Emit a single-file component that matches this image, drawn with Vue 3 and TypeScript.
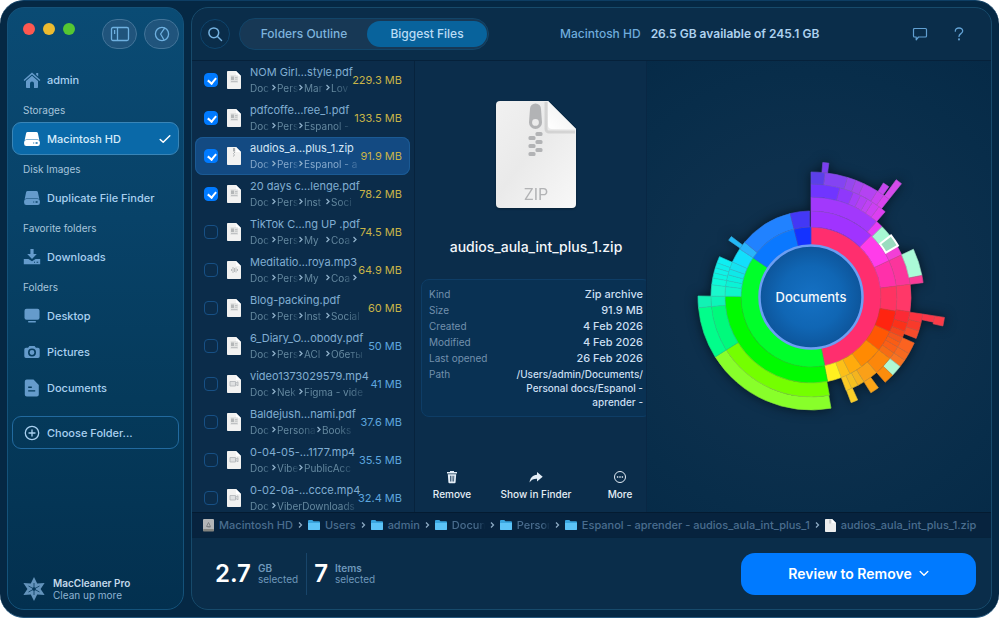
<script setup lang="ts">
import { ref } from 'vue'

type IconName = 'home' | 'disk' | 'download' | 'desktop' | 'camera' | 'doc'
interface NavItem { label: string; icon: IconName; active?: boolean }
interface NavGroup { title?: string; items: NavItem[] }
interface Crumb { text: string; wide?: boolean }
interface FileRow {
  name: string
  crumbs: Crumb[]
  tail?: boolean
  size: string
  large: boolean
  kind: 'pdf' | 'zip' | 'audio' | 'video'
  checked: boolean
}
type Arc = [inner: number, outer: number, from: number, to: number, color: string]

const groups: NavGroup[] = [
  { items: [{ label: 'admin', icon: 'home' }] },
  { title: 'Storages', items: [{ label: 'Macintosh HD', icon: 'disk', active: true }] },
  { title: 'Disk Images', items: [{ label: 'Duplicate File Finder', icon: 'disk' }] },
  { title: 'Favorite folders', items: [{ label: 'Downloads', icon: 'download' }] },
  {
    title: 'Folders',
    items: [
      { label: 'Desktop', icon: 'desktop' },
      { label: 'Pictures', icon: 'camera' },
      { label: 'Documents', icon: 'doc' },
    ],
  },
]

const c = (...names: string[]): Crumb[] => names.map((text) => ({ text }))

const files = ref<FileRow[]>([
  { name: 'NOM Girl…style.pdf', crumbs: c('Doc', 'Pers', 'Mar', 'Lov'), size: '229.3 MB', large: true, kind: 'pdf', checked: true },
  { name: 'pdfcoffe…ree_1.pdf', crumbs: c('Doc', 'Pers', 'Espanol -'), size: '133.5 MB', large: true, kind: 'pdf', checked: true },
  { name: 'audios_a…plus_1.zip', crumbs: c('Doc', 'Pers', 'Espanol - a'), size: '91.9 MB', large: true, kind: 'zip', checked: true },
  { name: '20 days c…lenge.pdf', crumbs: c('Doc', 'Pers', 'Inst', 'Soci'), size: '78.2 MB', large: true, kind: 'pdf', checked: true },
  { name: 'TikTok C…ng UP .pdf', crumbs: c('Doc', 'Pers', 'My', 'Coa'), tail: true, size: '74.5 MB', large: true, kind: 'pdf', checked: false },
  { name: 'Meditatio…roya.mp3', crumbs: c('Doc', 'Pers', 'My', 'Coa'), tail: true, size: '64.9 MB', large: true, kind: 'audio', checked: false },
  { name: 'Blog-packing.pdf', crumbs: c('Doc', 'Pers', 'Inst', 'Social'), size: '60 MB', large: true, kind: 'pdf', checked: false },
  { name: '6_Diary_O…obody.pdf', crumbs: c('Doc', 'Pers', 'ACI', 'Обеты'), size: '50 MB', large: false, kind: 'pdf', checked: false },
  { name: 'video1373029579.mp4', crumbs: c('Doc', 'Nek', 'Figma - vide'), size: '41 MB', large: false, kind: 'video', checked: false },
  { name: 'Baldejush…nami.pdf', crumbs: [{ text: 'Doc' }, { text: 'Persona', wide: true }, { text: 'Books' }], size: '37.6 MB', large: false, kind: 'pdf', checked: false },
  { name: '0-04-05-…1177.mp4', crumbs: c('Doc', 'Vibe', 'PublicAcc'), size: '35.5 MB', large: false, kind: 'video', checked: false },
  { name: '0-02-0a-…ccce.mp4', crumbs: c('Doc', 'ViberDownloads'), size: '32.4 MB', large: false, kind: 'video', checked: false },
])
const selected = ref(2)
const tab = ref<'outline' | 'biggest'>('biggest')

const details = [
  ['Kind', 'Zip archive'],
  ['Size', '91.9 MB'],
  ['Created', '4 Feb 2026'],
  ['Modified', '4 Feb 2026'],
  ['Last opened', '26 Feb 2026'],
]

const trail = [
  { text: 'Macintosh HD', icon: 'drive' },
  { text: 'Users', icon: 'folder' },
  { text: 'admin', icon: 'folder' },
  { text: 'Docun', icon: 'folder', cut: true },
  { text: 'Person', icon: 'folder', cut: true },
  { text: 'Espanol - aprender - audios_aula_int_plus_1', icon: 'folder' },
  { text: 'audios_aula_int_plus_1.zip', icon: 'file' },
]

// Ring radii of the sunburst, from the hub outwards
const R = [52, 70, 86, 100, 113, 125, 135, 145]

const arcs: Arc[] = [
  [R[0], R[1], 0, 168.7, '#ff2e6e'],
  [R[0], R[1], 168.7, 304, '#00ff2a'],
  [R[0], R[1], 304, 346, '#0a78ff'],
  [R[0], R[1], 346, 360, '#1432ff'],
  // violet branch
  [R[1], R[2], 0, 44.4, '#a033ff'],
  [R[2], R[3], 0, 41, '#a238fc'],
  [R[2], R[3], 41, 45.3, '#e83cf4'],
  [R[3], R[4], 0, 14.8, '#7035ff'],
  [R[3], R[4], 14.8, 22, '#8f38fb'],
  [R[3], R[4], 22, 26, '#a63ff8'],
  [R[3], R[4], 26, 30, '#b440f4'],
  [R[3], R[4], 30, 33, '#bf42f4'],
  [R[3], R[4], 33, 37, '#cc40f2'],
  [R[3], R[4], 37, 41, '#dc3ff0'],
  [R[4], R[5], 0, 6.5, '#5b3fe8'],
  [R[4], R[5], 6.5, 17, '#8444f2'],
  [R[4], R[5], 17, 21, '#9648ee'],
  [R[4], R[5], 21, 25, '#a547ee'],
  [R[4], R[5], 25, 32, '#b443f2'],
  [R[4], R[5], 32, 35.6, '#c942f0'],
  [R[4], R[5], 35.6, 38.6, '#d843ee'],
  [R[5], R[6], 5, 7.6, '#7a3ff0'],
  [R[5], R[6], 32.4, 35.2, '#c646ee'],
  [R[5], R[7], 36, 38.6, '#d54bec'],
  // magenta and pink
  [R[1], R[2], 44.4, 65, '#ff3cea'],
  [R[2], R[3], 45.3, 52.4, '#a6f7d3'],
  [R[2], R[3], 59.4, 65, '#f23fd6'],
  [R[1], R[2], 65, 82.7, '#ff30aa'],
  [R[2], R[3], 65, 82.7, '#fb359c'],
  [R[3], R[4], 65, 79, '#abfbd8'],
  [R[3], R[4], 79, 82.7, '#f93c97'],
  // reds
  [R[1], R[2], 82.7, 99.5, '#ff3362'],
  [R[2], R[3], 82.7, 98.5, '#ff3868'],
  [R[1], R[2], 99.5, 113.8, '#ff2410'],
  [R[2], R[3], 98.5, 105, '#fb2a35'],
  [R[2], R[3], 105, 110, '#fb3119'],
  [R[2], R[3], 110, 113.8, '#f4451c'],
  [R[3], R[4], 98.7, 103, '#fd3340'],
  [R[3], R[4], 103, 107.5, '#f83a2b'],
  [R[3], R[4], 107.5, 111.5, '#f64b2b'],
  [R[4], R[5], 98.7, 101.6, '#fb3648'],
  [R[5], R[6], 98.7, 102.4, '#fb3b48'],
  // oranges
  [R[1], R[2], 113.8, 128, '#ff5704'],
  [R[2], R[3], 113.8, 117, '#f4551d'],
  [R[2], R[3], 117, 120, '#f95d15'],
  [R[2], R[3], 120, 124, '#fa5f17'],
  [R[2], R[3], 124, 128, '#f76c14'],
  [R[3], R[4], 114, 120, '#fb6320'],
  [R[3], R[4], 120, 124, '#f76a20'],
  [R[3], R[4], 124, 128, '#f77423'],
  [R[3], R[4], 128, 133.8, '#b0f9d4'],
  [R[3], R[4], 133.8, 139, '#fb8c0c'],
  [R[1], R[2], 128, 144, '#ff8a02'],
  [R[2], R[3], 128, 139, '#fc870b'],
  [R[2], R[3], 139, 148, '#faa018'],
  [R[3], R[4], 143.4, 148, '#fca518'],
  // yellows
  [R[1], R[2], 144, 153, '#ffab0c'],
  [R[1], R[2], 153, 159.4, '#fcc018'],
  [R[1], R[2], 159.4, 168.9, '#fff01f'],
  [R[2], R[3], 148, 152, '#f5b41e'],
  [R[2], R[3], 152, 156, '#f4c020'],
  [R[2], R[3], 156, 159.4, '#fbc925'],
  [R[3], R[4], 155.6, 159.2, '#fbcf28'],
  // greens
  [R[1], R[2], 168.9, 270.5, '#00fb00'],
  [R[2], R[3], 169.4, 238, '#74ff00'],
  [R[3], R[4], 169.8, 238, '#88ff2a'],
  [R[2], R[3], 238, 264.5, '#00fa7c'],
  [R[3], R[4], 238, 264.5, '#02fd8b'],
  [R[2], R[3], 264.5, 270.5, '#0df5b9'],
  [R[3], R[4], 264.5, 270.5, '#12f2b4'],
  // cyans
  [R[1], R[2], 270.5, 277, '#0ff5cd'],
  [R[2], R[3], 270.5, 277, '#1af8cc'],
  [R[1], R[2], 277, 281, '#0af3d6'],
  [R[2], R[3], 277, 281, '#0ef9da'],
  [R[1], R[2], 281, 285, '#0af0df'],
  [R[2], R[3], 281, 284, '#0cf5e0'],
  [R[1], R[2], 285, 289, '#0fe8e8'],
  [R[2], R[3], 284, 287, '#10f2e8'],
  [R[2], R[3], 287, 290, '#0eeeea'],
  [R[1], R[2], 289, 294, '#14e2f0'],
  [R[2], R[3], 290, 293.8, '#0feef2'],
  [R[1], R[2], 294, 304, '#12dffc'],
  // blues
  [R[1], R[2], 304, 309.6, '#29b4fb'],
  [R[2], R[3], 304.6, 307.2, '#22b9f6'],
  [R[1], R[2], 309.6, 346, '#2182ff'],
  [R[1], R[2], 346, 359, '#4338f5'],
]

function point(r: number, deg: number): string {
  const a = (deg * Math.PI) / 180
  return `${(150 + r * Math.sin(a)).toFixed(2)} ${(150 - r * Math.cos(a)).toFixed(2)}`
}

function arcPath(inner: number, outer: number, from: number, to: number): string {
  const large = to - from > 180 ? 1 : 0
  return `M${point(inner, from)}L${point(outer, from)}A${outer} ${outer} 0 ${large} 1 ${point(outer, to)}L${point(inner, to)}A${inner} ${inner} 0 ${large} 0 ${point(inner, from)}Z`
}
</script>

<template>
  <div class="window">
    <aside class="sidebar">
      <div class="titlebar">
        <div class="lights"><i class="light red"></i><i class="light yellow"></i><i class="light green"></i></div>
        <div class="tools">
          <button class="tool" type="button" aria-label="Toggle sidebar">
            <svg width="20" height="16" viewBox="0 0 20 16" fill="none" stroke="currentColor" stroke-width="1.3">
              <rect x="1.5" y="1.5" width="17" height="13" rx="1.5" /><path d="M7.5 1.5v13M4.6 4v4" />
            </svg>
          </button>
          <button class="tool" type="button" aria-label="Scan history">
            <svg width="16" height="16" viewBox="0 0 16 16" fill="none" stroke="currentColor" stroke-width="1.3" stroke-linejoin="round" stroke-linecap="round">
              <circle cx="8" cy="8" r="6.6" /><path d="M10.6 2.2 6.6 8l3.2 5.5" />
            </svg>
          </button>
        </div>
      </div>

      <nav class="nav">
        <template v-for="(group, g) in groups" :key="g">
          <h2 v-if="group.title" class="nav-title">{{ group.title }}</h2>
          <a v-for="item in group.items" :key="item.label" href="#" class="nav-item" :class="{ active: item.active }">
            <svg class="nav-icon" width="18" height="18" viewBox="0 0 18 18" fill="currentColor">
              <template v-if="item.icon === 'home'">
                <path d="M9 1.4 17.4 9l-.9 1L9 3.4 1.5 10l-.9-1z" /><path d="M13.2 2h2v3.6l-2-1.8z" />
                <path d="M9 4.8 15 10v6.2a.8.8 0 0 1-.8.8H11v-4.6a2 2 0 0 0-4 0V17H3.8a.8.8 0 0 1-.8-.8V10z" />
              </template>
              <template v-else-if="item.icon === 'disk'">
                <path d="M4.6 2h8.8a1.6 1.6 0 0 1 1.5 1.2L16.3 9.9a4 4 0 0 0-1.8-.5h-11a4 4 0 0 0-1.8.5L3.1 3.2A1.6 1.6 0 0 1 4.6 2z" />
                <path fill-rule="evenodd" d="M3.3 10h11.4A2.2 2.2 0 0 1 16.9 12.2v1.6A2.2 2.2 0 0 1 14.7 16H3.3a2.2 2.2 0 0 1-2.2-2.2v-1.6A2.2 2.2 0 0 1 3.3 10zM10.2 12.6v.9h1v-.9zM12.6 12.3v1.4h2v-1.4z" />
              </template>
              <template v-else-if="item.icon === 'download'">
                <path d="M7.4 1h3.2v5h3.2L9 11 4.2 6h3.2z" />
                <path fill-rule="evenodd" d="M.8 11h4.6L9 13.2 12.6 11h4.6v5.2H.8zM11 13.8v1h1v-1zM13.6 13.8v1h1.6v-1z" />
              </template>
              <template v-else-if="item.icon === 'desktop'">
                <rect x="1.5" y="1.8" width="15" height="11" rx="2" /><rect x="5" y="14" width="8" height="1.4" rx=".7" />
              </template>
              <template v-else-if="item.icon === 'camera'">
                <path fill-rule="evenodd" d="M6.4 3h5.2l1.3 1.8H15a1.7 1.7 0 0 1 1.7 1.7v6.8A1.7 1.7 0 0 1 15 15H3a1.7 1.7 0 0 1-1.7-1.7V6.5A1.7 1.7 0 0 1 3 4.8h2.1zM9 5.5a4 4 0 1 0 0 8 4 4 0 0 0 0-8zm0 1.6a2.4 2.4 0 1 1 0 4.8 2.4 2.4 0 0 1 0-4.8z" />
              </template>
              <template v-else>
                <path fill-rule="evenodd" d="M3.8.6h6.7l5.3 5.3v9.5a2 2 0 0 1-2 2h-10a2 2 0 0 1-2-2V2.600a2 2 0 0 1 2-2zM5.2 7.600v1.300h3.600V7.600zM5.2 11.200v1.300h7v-1.300z" />
              </template>
            </svg>
            <span>{{ item.label }}</span>
            <svg v-if="item.active" class="nav-check" width="12" height="12" viewBox="0 0 12 12" fill="none" stroke="currentColor" stroke-width="1.5" stroke-linecap="round" stroke-linejoin="round">
              <path d="M1.2 6.5 4.2 9.3 10.8 2.8" />
            </svg>
          </a>
        </template>
        <button class="choose" type="button">
          <svg width="16" height="16" viewBox="0 0 16 16" fill="none" stroke="currentColor" stroke-width="1.3" stroke-linecap="round">
            <circle cx="8" cy="8" r="6.7" /><path d="M8 5v6M5 8h6" />
          </svg>
          <span>Choose Folder...</span>
        </button>
      </nav>

      <a class="promo" href="#">
        <svg width="24" height="26" viewBox="0 0 24 26" fill="currentColor">
          <path d="M12 1 15.2 7.5 22.6 7 18.6 13 22.6 19 15.2 18.5 12 25 8.8 18.5 1.4 19 5.4 13 1.4 7 8.8 7.5z" />
          <path d="M12 7v12M6.5 10l11 6M6.5 16l11-6" stroke="#05375a" stroke-width=".8" />
          <circle cx="12" cy="13" r="1.8" fill="#05375a" />
        </svg>
        <span class="promo-text"><strong>MacCleaner Pro</strong><span>Clean up more</span></span>
      </a>
    </aside>

    <main class="main">
      <header class="header">
        <button class="search" type="button" aria-label="Search">
          <svg width="16" height="16" viewBox="0 0 16 16" fill="none" stroke="currentColor" stroke-width="1.5" stroke-linecap="round">
            <circle cx="6.8" cy="6.8" r="4.9" /><path d="m10.5 10.5 4 4" />
          </svg>
        </button>
        <div class="tabs">
          <button type="button" class="tab" :class="{ on: tab === 'outline' }" @click="tab = 'outline'">Folders Outline</button>
          <button type="button" class="tab" :class="{ on: tab === 'biggest' }" @click="tab = 'biggest'">Biggest Files</button>
        </div>
        <h1 class="volume">Macintosh HD <strong>26.5 GB available of 245.1 GB</strong></h1>
        <div class="help">
          <button type="button" aria-label="Feedback">
            <svg width="16" height="14" viewBox="0 0 16 14" fill="none" stroke="currentColor" stroke-width="1.2" stroke-linejoin="round">
              <path d="M2.5 1.5h11a1 1 0 0 1 1 1v6.500a1 1 0 0 1-1 1H6.500L4.200 12.800V10H2.500a1 1 0 0 1-1-1V2.500a1 1 0 0 1 1-1z" />
            </svg>
          </button>
          <button type="button" aria-label="Help">
            <svg width="10" height="14" viewBox="0 0 10 14" fill="none" stroke="currentColor" stroke-width="1.3" stroke-linecap="round">
              <path d="M1.3 4.2C1.3 2.2 2.8 1 5 1s3.7 1.2 3.7 3.1C8.7 6.7 5 6.6 5 9.4" /><circle cx="5" cy="12.4" r=".4" />
            </svg>
          </button>
        </div>
      </header>

      <div class="content">
        <ul class="files">
          <li v-for="(file, i) in files" :key="file.name" class="file" :class="{ selected: selected === i }" @click="selected = i">
            <input :id="`file-${i}`" v-model="file.checked" type="checkbox" class="box" />
            <svg class="file-icon" width="14" height="18" viewBox="0 0 14 18">
              <path d="M.8 0H9l5 5v12.200a.8.8 0 0 1-.8.8H.8a.8.8 0 0 1-.8-.8V.8A.8.8 0 0 1 .8 0z" fill="#f2f2f1" />
              <path d="M9 0l5 5H9.6A.6.6 0 0 1 9 4.4z" fill="#fff" />
              <g v-if="file.kind === 'pdf'" fill="#b4b7b9">
                <path d="M4 5.500h3v3.500H4zM8 6h2.500v.8H8zM8 7.800h2.500v.8H8zM4 10h6.500v.8H4z" /><path d="M3.500 4h7.500v8H3.500z" opacity=".25" />
              </g>
              <g v-else-if="file.kind === 'zip'" fill="#a9adb0"><path d="M6 1h2v3.500H6zM7 5h1v1H7zM6 6.200h1v1H6zM7 7.400h1v1H7zM6 8.600h1v1H6z" /></g>
              <path v-else-if="file.kind === 'audio'" d="M4.5 8v2M6 6v6M7.5 7v4M9 6.5v5M10.5 8v2" stroke="#a9adb0" stroke-width=".8" />
              <path v-else d="M3 6.5h5.5v4.5H3zM8.5 8.2 11 6.8v4L8.5 9.4" fill="#dfe1e2" stroke="#b0b4b7" stroke-width=".8" />
            </svg>
            <div class="file-text">
              <label :for="`file-${i}`" class="file-name">{{ file.name }}</label>
              <div class="crumbs">
                <template v-for="(crumb, k) in file.crumbs" :key="k">
                  <span class="crumb" :class="{ last: k === file.crumbs.length - 1 && !file.tail, wide: crumb.wide }">{{ crumb.text }}</span>
                  <svg v-if="k < file.crumbs.length - 1 || file.tail" class="arrow" width="6" height="7" viewBox="0 0 6 7" fill="none" stroke="currentColor" stroke-width="1.3"><path d="M1.5 1 4 3.5 1.5 6" /></svg>
                </template>
              </div>
            </div>
            <span class="file-size" :class="{ large: file.large }">{{ file.size }}</span>
          </li>
        </ul>

        <section class="detail">
          <div class="detail-body">
            <svg class="zip" width="84" height="112" viewBox="0 0 84 112">
              <defs>
                <linearGradient id="paper" x1="0" y1="0" x2="1" y2="1"><stop offset="0" stop-color="#f1f1f1" /><stop offset=".45" stop-color="#eaeaea" /><stop offset="1" stop-color="#f8f8f8" /></linearGradient>
                <linearGradient id="fold" x1="0" y1="1" x2="1" y2="0"><stop offset="0" stop-color="#fff" /><stop offset="1" stop-color="#eee" /></linearGradient>
              </defs>
              <path d="M6 2H54L82 30v75a4 4 0 0 1-4 4H6a4 4 0 0 1-4-4V6a4 4 0 0 1 4-4z" fill="url(#paper)" />
              <path d="M52 3v27a3 3 0 0 0 3 3h26" fill="none" stroke="#000" stroke-opacity=".1" stroke-width="3" />
              <path d="M54 2 82 30H58a4 4 0 0 1-4-4z" fill="url(#fold)" />
              <path fill-rule="evenodd" d="M36 10a5.5 5.5 0 0 1 11 0l1 13.5a6.5 6.5 0 0 1-13 0zM41.500 20a3.400 3.400 0 1 0 0 6.800 3.400 3.400 0 0 0 0-6.800z" fill="#b2b3b5" />
              <g fill="#b2b3b5">
                <rect x="41.5" y="33" width="7" height="4" rx="1.5" /><rect x="34.5" y="37" width="7" height="4" rx="1.5" />
                <rect x="41.5" y="41" width="7" height="4" rx="1.5" /><rect x="34.5" y="45" width="7" height="4" rx="1.5" />
                <rect x="41.5" y="49" width="7" height="4" rx="1.5" /><rect x="34.5" y="53" width="7" height="4" rx="1.5" />
              </g>
              <text x="42" y="101" text-anchor="middle" class="zip-label">ZIP</text>
            </svg>
            <h2 class="detail-name">audios_aula_int_plus_1.zip</h2>
            <dl class="facts">
              <template v-for="[key, value] in details" :key="key"><dt>{{ key }}</dt><dd>{{ value }}</dd></template>
              <dt>Path</dt>
              <dd class="path">/Users/admin/Documents/<br />Personal docs/Espanol -<br />aprender -</dd>
            </dl>
            <div class="actions">
              <button type="button">
                <svg width="14" height="14" viewBox="0 0 14 14" fill="currentColor"><path d="M5 1h4v1h3v1.500H2V2h3z" /><path fill-rule="evenodd" d="M2.8 4.3h8.400l-.6 8a1 1 0 0 1-1 .9H4.400a1 1 0 0 1-1-.9zM5 5.800l.2 5.700h.7l-.2-5.700zm1.700 0v5.700h.7V5.800zm1.800 0-.2 5.700H9l.2-5.700z" /></svg>
                <span>Remove</span>
              </button>
              <button type="button">
                <svg width="14" height="14" viewBox="0 0 14 14" fill="currentColor"><path d="M8 2l5.700 4.700L8 11.400V8.800C4.800 8.700 2.400 9.700.6 12.500.8 8.400 3.500 5 8 4.700z" /></svg>
                <span>Show in Finder</span>
              </button>
              <button type="button">
                <svg width="14" height="14" viewBox="0 0 14 14" fill="none" stroke="currentColor"><circle cx="7" cy="7" r="5.5" /><path d="M3.9 7h1.400M6.300 7h1.400M8.700 7h1.400" stroke-width="1.4" /></svg>
                <span>More</span>
              </button>
            </div>
          </div>
        </section>

        <section class="chart">
          <svg width="300" height="300" viewBox="0 0 300 300" role="img" aria-label="Disk usage of Documents">
            <defs>
              <radialGradient id="hub" cx=".5" cy=".5" r=".5"><stop offset="0" stop-color="#1571c4" /><stop offset=".6" stop-color="#1066b4" /><stop offset="1" stop-color="#0d559b" /></radialGradient>
            </defs>
            <g class="rings">
              <path v-for="([r0, r1, a0, a1, color], i) in arcs" :key="i" :d="arcPath(r0, r1, a0, a1)" :fill="color" :stroke="color" class="base" />
              <path v-for="([r0, r1, a0, a1], i) in arcs" :key="`line-${i}`" :d="arcPath(r0, r1, a0, a1)" class="line" />
            </g>
            <path :d="arcPath(87, 101, 52.4, 59.4)" class="picked" />
            <circle cx="150" cy="150" r="51.5" class="hub" />
            <text x="150" y="155" text-anchor="middle" class="hub-text">Documents</text>
          </svg>
        </section>
      </div>

      <nav class="trail">
        <template v-for="(step, i) in trail" :key="i">
          <svg v-if="i > 0" class="sep" width="5" height="8" viewBox="0 0 5 8" fill="none" stroke="currentColor" stroke-width="1.3"><path d="M1 1.5 3.5 4 1 6.5" /></svg>
          <a href="#" class="step">
            <svg v-if="step.icon === 'drive'" width="11" height="13" viewBox="0 0 11 13"><rect width="11" height="12" rx="1" fill="#b3b5b7" /><rect y="10" width="11" height="2.5" rx=".8" fill="#83847f" /><path d="M3.5 7.5 5.5 3.5l2 4zM4.5 8h3" stroke="#7d8083" fill="none" /></svg>
            <svg v-else-if="step.icon === 'folder'" width="12" height="12" viewBox="0 0 12 12"><path d="M0 2a1 1 0 0 1 1-1h3.300l1.200 1.200H11a1 1 0 0 1 1 1V10a1 1 0 0 1-1 1H1a1 1 0 0 1-1-1z" fill="#3aa6e0" /><path d="M0 4h12v6a1 1 0 0 1-1 1H1a1 1 0 0 1-1-1z" fill="#5cc3f7" /></svg>
            <svg v-else width="11" height="13" viewBox="0 0 11 13"><path d="M0 .8A.8.8 0 0 1 .8 0H7l4 4v8.200a.8.8 0 0 1-.8.8H.8a.8.8 0 0 1-.8-.8z" fill="#eceded" /><path d="M7 0l4 4H7z" fill="#fff" /><path d="M5 .5v4" stroke="#a9adb0" /></svg>
            <span :class="{ cut: step.cut }">{{ step.text }}</span>
          </a>
        </template>
      </nav>

      <footer class="footer">
        <div class="stat"><b>2.7</b><span><strong>GB</strong>selected</span></div>
        <div class="stat"><b>7</b><span><strong>Items</strong>selected</span></div>
        <button class="review" type="button">
          Review to Remove
          <svg width="10" height="7" viewBox="0 0 10 7" fill="none" stroke="currentColor" stroke-width="1.4" stroke-linecap="round" stroke-linejoin="round"><path d="M1.2 1.5 5 5.2l3.800-3.700" /></svg>
        </button>
      </footer>
    </main>
  </div>
</template>

<style>
body {
  background: #fff;
}
</style>

<style scoped>
* {
  box-sizing: border-box;
}
.window {
  display: grid;
  grid-template-columns: 177px minmax(0, 1fr);
  gap: 7px;
  height: 100vh;
  min-height: 600px;
  padding: 6px 7px 7px;
  border-radius: 24px;
  background: #052844;
  border-top: 1px solid #0d3d63;
  border-bottom: 1px solid #24577e;
  color: #d3e3f2;
  font-family: Inter, 'Noto Sans', sans-serif;
  font-size: 11px;
  line-height: 14px;
}
button {
  padding: 0;
  border: 0;
  background: none;
  color: inherit;
  font: inherit;
}
a {
  color: inherit;
  text-decoration: none;
}
svg {
  flex: none;
  display: block;
}
h1,
h2,
dl,
dd,
ul {
  margin: 0;
  padding: 0;
  font-weight: 400;
  font-size: inherit;
}

/* Sidebar */
.sidebar {
  display: flex;
  flex-direction: column;
  padding: 0 4px 7px;
  border: 1px solid #14527a;
  border-radius: 17px;
  background: linear-gradient(#0a4b74, #084268 35%, #053a5b 65%, #03304f);
}
.titlebar {
  display: flex;
  justify-content: space-between;
  height: 55px;
  padding: 11px 0 0 11px;
}
.lights {
  display: flex;
  gap: 8px;
  padding-top: 4px;
}
.light {
  width: 12px;
  height: 12px;
  border-radius: 50%;
}
.red { background: #fe5850; }
.yellow { background: #edbb2f; }
.green { background: #55c732; }
.tools {
  display: flex;
  gap: 7px;
}
.tool {
  display: grid;
  place-items: center;
  width: 35px;
  height: 30px;
  border: 1px solid #427499;
  border-radius: 15px;
  background: #20547c;
  color: #6eb0e0;
}
.nav {
  display: flex;
  flex-direction: column;
  gap: 3px;
}
.nav-title {
  height: 20px;
  padding-left: 11px;
  color: #a7c5dc;
  font-size: 10px;
  line-height: 22px;
}
.nav-item,
.choose {
  display: flex;
  align-items: center;
  gap: 6px;
  height: 33px;
  padding: 0 7px 0 10px;
  border: 1px solid transparent;
  border-radius: 9px;
  color: #a9d0f0;
  font-weight: 500;
}
.nav-icon {
  color: #659bcb;
}
.nav-item.active {
  border-color: #3985b7;
  background: #0a69a8;
  color: #d7ecfb;
}
.nav-item.active .nav-icon {
  color: #fff;
}
.nav-check {
  margin-left: auto;
  color: #fff;
}
.choose {
  gap: 7px;
  padding-left: 11px;
  margin-top: 9px;
  border-color: #226a9f;
}
.promo {
  display: flex;
  align-items: center;
  gap: 7px;
  margin-top: auto;
  padding-left: 10px;
  color: #8fb4d3;
}
.promo > svg {
  color: #6393bb;
}
.promo-text {
  display: grid;
  font-size: 10px;
  line-height: 12px;
}
.promo-text strong {
  color: #c3d9ea;
  font-weight: 600;
}

/* Main pane */
.main {
  display: flex;
  flex-direction: column;
  min-width: 0;
  border: 1px solid #174a6b;
  border-radius: 17px;
  background: #0a2d4a;
  overflow: hidden;
}
.header {
  display: flex;
  align-items: center;
  height: 53px;
  flex: none;
  padding: 0 27px 0 8px;
  border-bottom: 1px solid #06213a;
}
.search {
  display: grid;
  place-items: center;
  width: 30px;
  height: 30px;
  border: 1px solid #0f456d;
  border-radius: 50%;
  color: #75b2e0;
}
.tabs {
  display: flex;
  width: 250px;
  height: 32px;
  margin-left: 9px;
  padding: 2px 1px;
  border: 1px solid #124569;
  border-radius: 16px;
  background: #173855;
}
.tab {
  flex: 1 1 0;
  border-radius: 13px;
  color: #7db3dc;
  font-size: 12px;
  font-weight: 500;
}
.tab.on {
  flex-grow: 0;
  flex-basis: 120px;
  background: #08639c;
  color: #b9dcf5;
}
.volume {
  display: flex;
  gap: 10px;
  margin-left: 71px;
  color: #6eabdb;
  font-size: 12px;
  font-weight: 500;
  white-space: nowrap;
}
.volume strong {
  color: #aed2ef;
  font-weight: 600;
}
.help {
  display: flex;
  align-items: center;
  gap: 26px;
  margin-left: auto;
  color: #61a0d2;
}
.content {
  display: grid;
  grid-template-columns: 223px 232px minmax(0, 1fr);
  flex: 1;
  min-height: 0;
}

/* File list */
.files {
  overflow: hidden;
  border-right: 1px solid #07233d;
  background: #0b2c4a;
  list-style: none;
}
.file {
  display: flex;
  align-items: center;
  height: 38px;
  margin: 0 4px 0 3px;
  padding: 0 8px 0 9px;
  border-radius: 8px;
}
.file.selected {
  background: #134a82;
  box-shadow: inset 0 0 0 1px #1b5a94;
}
.box {
  position: relative;
  flex: none;
  width: 14px;
  height: 14px;
  margin: 0;
  appearance: none;
  border: 1px solid #175085;
  border-radius: 4px;
}
.box:checked {
  border-color: #007aff;
  background: #007aff;
}
.box:checked::after {
  content: '';
  position: absolute;
  left: 4px;
  top: 2px;
  width: 4px;
  height: 6px;
  border: solid #fff;
  border-width: 0 2px 2px 0;
  transform: rotate(40deg);
}
.file-icon {
  margin-left: 9px;
}
.file-text {
  flex: 1;
  min-width: 0;
  margin-left: 9px;
}
.file-name {
  display: block;
  height: 15px;
  color: #80aed2;
  white-space: nowrap;
}
.selected .file-name {
  color: #d5e7f7;
}
.crumbs {
  display: flex;
  align-items: center;
  height: 15px;
  color: #64889f;
  font-size: 10px;
}
.selected .crumbs {
  color: #86a9cc;
}
.crumb {
  flex: none;
  width: 21px;
  white-space: nowrap;
  mask-image: linear-gradient(90deg, #000 60%, rgba(0, 0, 0, 0.2) 96%);
}
.crumb.wide {
  width: 39px;
}
.crumb.last {
  width: auto;
  mask-image: linear-gradient(90deg, #000 calc(100% - 14px), rgba(0, 0, 0, 0.3));
}
.arrow {
  color: #8fb0ca;
}
.file-size {
  flex: none;
  color: #5da6de;
}
.file-size.large {
  color: #c8b448;
}

/* Details */
.detail {
  overflow: hidden;
  border-right: 1px solid #092744;
  background: #0b2d4b;
}
.detail-body {
  display: flex;
  flex-direction: column;
  align-items: center;
  width: 242px;
  height: 100%;
  padding: 38px 6px 11px;
}
.zip {
  filter: drop-shadow(0 1px 1px rgba(0, 0, 0, 0.3));
}
.zip-label {
  fill: #b2b3b5;
  font-size: 16px;
}
.detail-name {
  margin-top: 27px;
  color: #f2f6fa;
  font-size: 14px;
  font-weight: 500;
  line-height: 18px;
}
.facts {
  display: grid;
  grid-template-columns: auto 1fr;
  row-gap: 2px;
  width: 100%;
  margin-top: 23px;
  padding: 7px;
  border: 1px solid #0e3d66;
  border-radius: 8px;
  background: #093153;
}
.facts dt {
  color: #7290ad;
  font-size: 10px;
}
.facts dd {
  color: #cbdff1;
  font-weight: 500;
  text-align: right;
}
.facts .path {
  font-size: 10px;
}
.actions {
  display: grid;
  grid-template-columns: repeat(3, 84px);
  justify-content: center;
  width: 100%;
  margin-top: auto;
}
.actions button {
  display: grid;
  justify-items: center;
  gap: 3px;
  color: #e4edf6;
  font-size: 10px;
  font-weight: 500;
}

/* Sunburst */
.chart {
  display: grid;
  place-items: center;
  padding: 20px 17px 0 0;
  background: radial-gradient(circle at 47% 52%, #10304c 20%, #0d304d 45%, #082d4a 75%, #062a47);
  overflow: hidden;
}
.rings {
  filter: drop-shadow(0 0 6px rgba(0, 8, 16, 0.7));
}
.base {
  stroke-width: 0.6;
}
.line {
  fill: none;
  stroke: rgba(120, 125, 135, 0.22);
  stroke-width: 0.6;
}
.picked {
  fill: #9adcbf;
  stroke: #fff;
  stroke-width: 2;
}
.hub {
  fill: url(#hub);
  stroke: #6c9ef3;
  stroke-width: 2.5;
}
.hub-text {
  fill: #f4f8fc;
  font-size: 13px;
  font-weight: 500;
}

/* Path bar */
.trail {
  display: flex;
  align-items: center;
  gap: 5px;
  flex: none;
  height: 26px;
  padding: 0 10px 0 11px;
  border-top: 1px solid #041b31;
  border-bottom: 1px solid #06233c;
  background: #07233e;
  color: #4a6d8e;
  font-weight: 500;
  white-space: nowrap;
}
.step {
  display: flex;
  align-items: center;
  gap: 5px;
}
.sep {
  color: #8ba9c1;
}
.cut {
  width: 33px;
  overflow: hidden;
  mask-image: linear-gradient(90deg, #000 75%, transparent);
}

/* Footer */
.footer {
  display: flex;
  align-items: center;
  flex: none;
  height: 71px;
  padding: 0 15px 0 23px;
}
.stat {
  display: flex;
  align-items: center;
  gap: 7px;
  height: 42px;
}
.stat + .stat {
  margin-left: 8px;
  padding-left: 7px;
  border-left: 1px solid #18456a;
}
.stat b {
  color: #fff;
  font-size: 24px;
  font-weight: 600;
  line-height: 28px;
}
.stat span {
  display: grid;
  color: #6f98bb;
  font-size: 10px;
  line-height: 11px;
}
.stat strong {
  font-weight: 600;
}
.review {
  display: flex;
  align-items: center;
  justify-content: center;
  gap: 7px;
  width: 235px;
  height: 42px;
  margin-left: auto;
  border-radius: 14px;
  background: #007aff;
  color: #fff;
  font-size: 14px;
  font-weight: 600;
}
</style>
